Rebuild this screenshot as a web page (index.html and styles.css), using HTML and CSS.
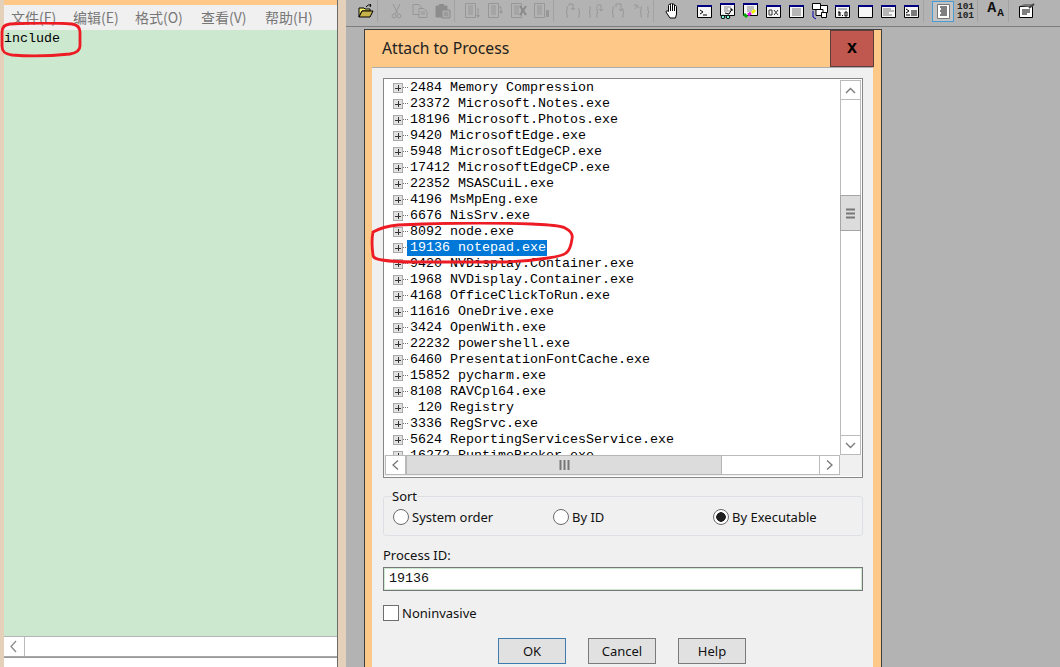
FILE: index.html
```html
<!DOCTYPE html>
<html lang="zh">
<head>
<meta charset="utf-8">
<title>Attach to Process</title>
<link rel="stylesheet" href="styles.css">
</head>
<body>
<div class="notepad">
  <div class="np-window">
    <div class="np-top"></div>
    <nav class="np-menu">
      <span class="m1">文件(F)</span><span class="m2">编辑(E)</span><span class="m3">格式(O)</span><span class="m4">查看(V)</span><span class="m5">帮助(H)</span>
    </nav>
    <div class="np-edit">include</div>
    <div class="np-hscroll">
      <div class="np-left"><svg width="20" height="19" viewBox="0 0 20 19"><path d="M12 4 7 9.500 12 15" fill="none" stroke="#8a8a8a" stroke-width="1.300"/></svg></div>
    </div>
    <div class="np-status"></div>
  </div>
</div>

<main class="debugger">
  <div class="toolbar">
    <div class="tb"><svg width="16" height="14" viewBox="0 0 16 14"><path d="M1 4h5l1 1h5v2H4L1 13Z" fill="#f4ee6a" stroke="#000"/><path d="M1 13h11l3-6H4Z" fill="#c8b24a" stroke="#000"/><path d="M8 3 Q10 0 13 1M13 1l-1.500-1M13 1l-1 2" fill="none" stroke="#000"/></svg></div>
    <i class="sep sep-7"></i>
    <div class="tb"><svg width="11" height="15" viewBox="0 0 11 15"><path d="M2 0l5 10M9 0 4 10" fill="none" stroke="#979797"/><circle cx="3" cy="12" r="2" fill="none" stroke="#979797"/><circle cx="8" cy="12" r="2" fill="none" stroke="#979797"/></svg></div>
    <div class="tb"><svg width="16" height="14" viewBox="0 0 16 14"><path d="M1 .5h6l2 2v8H1Z" fill="none" stroke="#979797"/><path d="M7 4.500h5l3 3v6H7Z" fill="#b3b3b3" stroke="#979797"/><path d="M9 8h4M9 10h4" stroke="#979797"/></svg></div>
    <div class="tb"><svg width="16" height="15" viewBox="0 0 16 15"><path d="M1 2h11v11H1Z" fill="#8d8d8d" stroke="#8d8d8d"/><path d="M4 0h5v3H4Z" fill="#8d8d8d"/><path d="M7 6h8v8H7Z" fill="#aaa" stroke="#8d8d8d"/><path d="M9 9h4M9 11h4" stroke="#8d8d8d"/></svg></div>
    <i class="sep sep-6"></i>
    <div class="tb"><svg width="16" height="16" viewBox="0 0 16 16"><path d="M.5.500h10v14H.5Z" fill="none" stroke="#979797"/><path d="M3 3h5M3 5h5M3 7h5M3 9h5M3 11h5M13 5v9" stroke="#979797"/><path d="M11 12l2 3 2-3Z" fill="#979797"/></svg></div>
    <div class="tb"><svg width="16" height="16" viewBox="0 0 16 16"><path d="M.5.500h10v14H.5Z" fill="none" stroke="#979797"/><path d="M3 3h5M3 5h5M3 7h5M3 9h5M3 11h5M10 4h3v4" fill="none" stroke="#979797"/><path d="M11 8l2 3 2-3Z" fill="#979797"/></svg></div>
    <div class="tb"><svg width="16" height="16" viewBox="0 0 16 16"><path d="M.5.500h10v14H.5Z" fill="none" stroke="#979797"/><path d="M3 3h5M3 5h5M3 7h5M3 9h5M3 11h5" stroke="#979797"/><path d="M9 3l6 9M15 3 9 12" stroke="#8a8a8a" stroke-width="2"/></svg></div>
    <div class="tb"><svg width="16" height="16" viewBox="0 0 16 16"><path d="M.5.500h10v14H.5Z" fill="none" stroke="#979797"/><path d="M3 3h5M3 5h5M3 7h5M3 9h5M3 11h5" stroke="#979797"/><path d="M12 7h3v7h-3Z" fill="#979797"/></svg></div>
    <i class="sep sep-7"></i>
    <div class="tb"><svg width="16" height="16" viewBox="0 0 16 16"><path d="M3 4H2v4L1 9l1 1v4h1M13 6h1v3l1 1-1 1v3h-1M4 3V1h4v5M6 5l2 2 2-2" fill="none" stroke="#979797"/></svg></div>
    <div class="tb"><svg width="16" height="16" viewBox="0 0 16 16"><path d="M3 4H2v4L1 9l1 1v4h1M8 4h1v4l1 1-1 1v4H8M9 2h4v5M11 6l2 2 2-2" fill="none" stroke="#979797"/></svg></div>
    <div class="tb"><svg width="16" height="16" viewBox="0 0 16 16"><path d="M3 4H2v4L1 9l1 1v4h1M11 6h1v3l1 1-1 1v3h-1M5 4V1h5v6M8 6l2 2 2-2" fill="none" stroke="#979797"/></svg></div>
    <div class="tb"><svg width="16" height="16" viewBox="0 0 16 16"><path d="M8 4H7v4L6 9l1 1v4h1M13 4h1v4l1 1-1 1v4h-1M0 2h3l2 3M1 6l2-3" fill="none" stroke="#979797"/></svg></div>
    <i class="sep sep-7"></i>
    <div class="tb tb-hand"><svg width="15" height="17" viewBox="0 0 15 17"><path d="M5 15 1 9c0-1.500 1.500-1.500 2.500-.5V2.500c0-1.500 2-1.500 2 0V1c0-1.300 2-1.300 2 0v1c0-1.300 2-1.300 2 0v1.500c0-1.300 2-1.300 2 0V11l-1 4Z" fill="#fff" stroke="#000"/><path d="M5.500 3v5M7.500 2v6M9.500 3v5" stroke="#000"/></svg></div>
    <div class="tb"><svg class="win" viewBox="0 0 15 13"><use href="#frame"/><path d="M3 5l3 2-3 2M6 10h4" fill="none" stroke="#000"/></svg></div>
    <div class="tb"><svg class="win tall" viewBox="0 0 15 16"><use href="#frame"/><path d="M4 4h7M4 6h4M4 8h6" stroke="#888"/><path d="M5 10l4 1 3-5M10 6h2v2" fill="none" stroke="#000"/><circle cx="3" cy="14" r="1.800" fill="#7fd" stroke="#000"/><circle cx="8" cy="14" r="1.800" fill="#7fd" stroke="#000"/></svg></div>
    <div class="tb"><svg class="win tall" viewBox="0 0 15 16"><use href="#frame"/><path d="M4 4h7M4 6h7M4 8h5" stroke="#888"/><path d="M1 11l3 3" stroke="#0a0" stroke-width="3"/><path d="M5 12l3-2" stroke="#e0e" stroke-width="3"/><path d="M9 10l3-3" stroke="#ee0" stroke-width="3"/></svg></div>
    <div class="tb"><svg class="win" viewBox="0 0 15 13"><use href="#frame"/><path d="M3 5h3v5H3ZM8 5l4 5M12 5l-4 5" fill="none" stroke="#333"/></svg></div>
    <div class="tb"><svg class="win" viewBox="0 0 15 13"><use href="#frame"/><path d="M3 4h9M3 6h9M3 8h9M3 10h9" stroke="#777"/></svg></div>
    <div class="tb"><svg width="16" height="17" viewBox="0 0 16 17"><path d="M.5.500h8v6H.5Z" fill="#fff" stroke="#000"/><path d="M8.500 2.500h7v7h-7Z" fill="#fff" stroke="#000"/><path d="M4 6.500h7v6H4Z" fill="#fff" stroke="#000"/><path d="M9.500 9.500h5v5h-5Z" fill="#fff" stroke="#000"/><path d="M1 8v6l3 2" fill="none" stroke="#00a"/></svg></div>
    <div class="tb"><svg class="win" viewBox="0 0 15 13"><use href="#frame"/><path d="M3 4h9" stroke="#777"/><path d="M3 7h2v4M4 7v4M10 7h2v4h-2ZM7.500 10v1" fill="none" stroke="#000"/></svg></div>
    <div class="tb"><svg class="win" viewBox="0 0 15 13"><use href="#frame"/></svg></div>
    <div class="tb"><svg class="win" viewBox="0 0 15 13"><use href="#frame"/><path d="M2 4h8M2 6h11M2 8h6M2 10h9" stroke="#777"/></svg></div>
    <div class="tb"><svg class="win" viewBox="0 0 15 13"><use href="#frame"/><path d="M2 4l3 2-3 2M2 10h4M7 6h6M7 8h6M7 10h6" fill="none" stroke="#000"/></svg></div>
    <i class="sep sep-view"></i>
    <div class="tb tb-active"><svg width="13" height="15" viewBox="0 0 13 15"><path d="M.5.500h12v14H.5Z" fill="#fff" stroke="#777"/><path d="M3 3h7M4 5h6M3 7h7M4 9h6M3 11h7" stroke="#000"/></svg></div>
    <div class="tb tb-bin"><span>101</span><span>101</span></div>
    <i class="sep"></i>
    <div class="tb tb-font"><b class="big">A</b><b class="small">A</b></div>
    <i class="sep"></i>
    <div class="tb tb-prop"><svg width="16" height="16" viewBox="0 0 16 16"><path d="M.5 3.500h13v11H.5Z" fill="#fff" stroke="#000"/><path d="M1 3 5 1h8l-2 3Z" fill="#777"/><path d="M3 7h8M3 9h8M3 11h5" stroke="#000"/><path d="M10 5l5-4" stroke="#444" stroke-width="2"/></svg></div>
  </div>

  <section class="dialog">
    <header class="titlebar">
      <h1>Attach to Process</h1>
      <button class="close">x</button>
    </header>
    <div class="dialog-body">
      <div class="list">
        <div class="list-main">
          <div class="rows" id="rows">
            <div class="row"><i class="plus"></i><span>2484 Memory Compression</span></div>
            <div class="row"><i class="plus"></i><span>23372 Microsoft.Notes.exe</span></div>
            <div class="row"><i class="plus"></i><span>18196 Microsoft.Photos.exe</span></div>
            <div class="row"><i class="plus"></i><span>9420 MicrosoftEdge.exe</span></div>
            <div class="row"><i class="plus"></i><span>5948 MicrosoftEdgeCP.exe</span></div>
            <div class="row"><i class="plus"></i><span>17412 MicrosoftEdgeCP.exe</span></div>
            <div class="row"><i class="plus"></i><span>22352 MSASCuiL.exe</span></div>
            <div class="row"><i class="plus"></i><span>4196 MsMpEng.exe</span></div>
            <div class="row"><i class="plus"></i><span>6676 NisSrv.exe</span></div>
            <div class="row"><i class="plus"></i><span>8092 node.exe</span></div>
            <div class="row selected"><i class="plus"></i><span>19136 notepad.exe</span></div>
            <div class="row"><i class="plus"></i><span>9420 NVDisplay.Container.exe</span></div>
            <div class="row"><i class="plus"></i><span>1968 NVDisplay.Container.exe</span></div>
            <div class="row"><i class="plus"></i><span>4168 OfficeClickToRun.exe</span></div>
            <div class="row"><i class="plus"></i><span>11616 OneDrive.exe</span></div>
            <div class="row"><i class="plus"></i><span>3424 OpenWith.exe</span></div>
            <div class="row"><i class="plus"></i><span>22232 powershell.exe</span></div>
            <div class="row"><i class="plus"></i><span>6460 PresentationFontCache.exe</span></div>
            <div class="row"><i class="plus"></i><span>15852 pycharm.exe</span></div>
            <div class="row"><i class="plus"></i><span>8108 RAVCpl64.exe</span></div>
            <div class="row"><i class="plus"></i><span> 120 Registry</span></div>
            <div class="row"><i class="plus"></i><span>3336 RegSrvc.exe</span></div>
            <div class="row"><i class="plus"></i><span>5624 ReportingServicesService.exe</span></div>
            <div class="row"><i class="plus"></i><span>16272 RuntimeBroker.exe</span></div>
          </div>
          <div class="vscroll">
            <div class="sbtn"><svg width="19" height="19" viewBox="0 0 19 19"><path d="M5 12l4.500-4.500L14 12" fill="none" stroke="#777" stroke-width="1.300"/></svg></div>
            <div class="vtrack">
              <div class="vthumb"><svg width="12" height="11" viewBox="0 0 12 11"><path d="M1 1.500h9M1 5.500h9M1 9.500h9" stroke="#777" stroke-width="2"/></svg></div>
            </div>
            <div class="sbtn"><svg width="19" height="19" viewBox="0 0 19 19"><path d="M5 7l4.500 4.500L14 7" fill="none" stroke="#777" stroke-width="1.300"/></svg></div>
          </div>
        </div>
        <div class="hscroll">
          <div class="sbtn hbtn"><svg width="19" height="18" viewBox="0 0 19 18"><path d="M12 4.500 7 9l5 4.500" fill="none" stroke="#777" stroke-width="1.300"/></svg></div>
          <div class="hthumb"><svg width="11" height="10" viewBox="0 0 11 10"><path d="M1.500 0v10M5.500 0v10M9.500 0v10" stroke="#777" stroke-width="2"/></svg></div>
          <div class="htrack"></div>
          <div class="sbtn hbtn"><svg width="19" height="18" viewBox="0 0 19 18"><path d="M7 4.500 12 9l-5 4.500" fill="none" stroke="#777" stroke-width="1.300"/></svg></div>
        </div>
      </div>

      <fieldset class="sort">
        <legend>Sort</legend>
        <label class="opt opt-sys"><i class="radio"></i>System order</label>
        <label class="opt opt-id"><i class="radio"></i>By ID</label>
        <label class="opt"><i class="radio on"></i>By Executable</label>
      </fieldset>

      <div class="pid-label">Process ID:</div>
      <div class="pid">19136</div>

      <label class="check"><i class="box"></i>Noninvasive</label>

      <div class="buttons">
        <button class="btn default">OK</button>
        <button class="btn">Cancel</button>
        <button class="btn">Help</button>
      </div>
    </div>
  </section>
</main>

<svg class="mark mark-include" width="84" height="36" viewBox="0 0 84 36"><path d="M10 2C30 1 60 1 72 2 78 3 80 6 80 10L80 24C80 29 76 31 70 32 50 34 25 34 12 33 4 32 2 29 2 24L2 10C2 5 5 2.500 10 2Z" fill="none" stroke="#ed1c24" stroke-width="2.800"/></svg>
<svg class="mark mark-note" width="206" height="44" viewBox="0 0 206 44"><path d="M3 10C10 6 18 4 28 3 70 1 130 1 162 2 178 3 190 3 195 6 201 9 203 13 202 17 201 24 199 29 196 31 192 34 186 35 178 36 160 39 140 40 128 40L45 40C30 40 18 39 12 38 6 37 3 36 3 33 2 26 2 15 3 10Z" fill="none" stroke="#ed1c24" stroke-width="2.800"/></svg>

<svg class="defs" width="0" height="0"><defs><g id="frame"><path d="M.5.500h14v12H.5Z" fill="#f6f6f6" stroke="#000"/><path d="M0 0h15v2H0Z" fill="#000080"/></g></defs></svg>
</body>
</html>
```

FILE: styles.css
```css
* { box-sizing: border-box; }
html, body { margin: 0; padding: 0; }
body {
  width: 1060px;
  height: 667px;
  overflow: hidden;
  display: flex;
  position: relative;
  background: #b3b3b3;
  font-family: "Noto Sans", "Open Sans", sans-serif;
  font-size: 13px;
  color: #111;
}

/* Notepad */
.notepad {
  width: 346px;
  height: 667px;
  flex: none;
  background: #e5d1b9;
  padding-left: 4px;
}
.np-window {
  width: 334px;
  height: 667px;
  display: flex;
  flex-direction: column;
  border-right: 1px solid #6b6b6b;
}
.np-top { height: 5px; background: #fdc888; }
.np-menu {
  height: 25px;
  background: #f0f0f0;
  display: flex;
  color: #777;
  font-family: "Noto Sans CJK SC", "Noto Sans", sans-serif;
  font-size: 14px;
  line-height: 25px;
  white-space: nowrap;
}
.np-menu span { display: block; }
.m1 { margin-left: 7px; width: 62px; }
.m2 { width: 62px; }
.m3 { width: 66px; }
.m4 { width: 64px; }
.np-edit {
  height: 606px;
  background: #cce8cf;
  font: 13.333px/16px "Liberation Mono", monospace;
  color: #000;
  padding-top: 1px;
}
.np-hscroll {
  height: 21px;
  background: #fff;
  border-top: 1px solid #b5b5b5;
  border-bottom: 1px solid #a8a8a8;
  display: flex;
}
.np-left { width: 21px; border-right: 1px solid #bbb; height: 19px; }
.np-left svg { display: block; }
.np-status { flex: 1; background: #fff; border-top: 1px solid #999; }

/* Debugger */
.debugger { flex: 1; min-width: 0; display: flex; flex-direction: column; }
.toolbar {
  height: 27px;
  flex: none;
  display: flex;
  align-items: flex-start;
  padding-left: 8px;
  background: #b3b3b3;
  border-bottom: 1px solid #7d7d7d;
}
.tb {
  width: 23px;
  height: 22px;
  flex: none;
  display: flex;
  align-items: center;
  justify-content: center;
}
.tb svg { display: block; }
.sep { width: 1px; height: 22px; flex: none; background: #a3a3a3; }
.sep-6 { margin-right: 6px; }
.sep-7 { margin-right: 7px; }
.sep-view { margin-right: 8px; }
.tb-hand { margin-right: 9px; }
.win { width: 15px; height: 13px; }
.win.tall { height: 16px; }
.tb-active {
  width: 22px;
  height: 21px;
  margin-top: 1px;
  border: 1px solid #4a9bd1;
  background: #c3c3c3;
}
.tb-bin {
  flex-direction: column;
  font: 700 9.500px/9px "Liberation Mono", monospace;
  color: #222;
}
.tb-font {
  width: 30px;
  padding: 0 0 3px 5px;
  align-items: flex-end;
  gap: 1px;
  color: #111;
  font-family: "Liberation Mono", monospace;
}
.tb-font .big { font-size: 15px; line-height: 15px; margin-bottom: 3px; }
.tb-font .small { font-size: 11px; line-height: 11px; }
.tb-prop { width: 36px; }

.dialog {
  width: 518px;
  margin: 2px 0 0 18px;
  height: 640px;
  background: #fdc888;
  border: 1px solid #3e3e3e;
  border-bottom: 0;
  padding: 0 8px 0 7px;
  display: flex;
  flex-direction: column;
}
.titlebar {
  height: 37px;
  flex: none;
  display: flex;
  align-items: center;
  justify-content: space-between;
  padding-left: 10px;
}
.titlebar h1 {
  margin: 0;
  font-size: 15.700px;
  font-weight: 400;
  color: #222;
  line-height: 37px;
}
.close {
  width: 44px;
  height: 37px;
  background: #c1584f;
  border: 1px solid #5c3f3c;
  font: 700 18px/30px "Liberation Sans", sans-serif;
  color: #000;
  padding: 0 0 4px;
  margin-right: -1px;
}
.dialog-body {
  flex: 1;
  background: #f0f0f0;
  border-top: 1px solid #adadad;
  padding: 10px 10px 0 11px;
}

.list {
  width: 480px;
  height: 400px;
  background: #fff;
  border: 1px solid #878787;
  display: flex;
  flex-direction: column;
  background-clip: padding-box;
}
.list-main { height: 376px; display: flex; overflow: hidden; flex: none; }
.rows {
  flex: 1;
  min-width: 0;
  overflow: hidden;
  padding-top: 1px;
  font: 13.333px/16px "Liberation Mono", monospace;
  color: #000;
}
.row {
  height: 16px;
  padding-left: 9px;
  display: flex;
  align-items: center;
  white-space: pre;
}
.row span { display: block; margin-left: 4px; padding: 0 1px 0 3px; height: 16px; line-height: 16px; }
.selected span { background: #0078d7; color: #fff; }
.plus {
  position: relative;
  width: 10px;
  height: 10px;
  flex: none;
  background:
    linear-gradient(#333, #333) center / 6px 1px no-repeat,
    linear-gradient(#333, #333) center / 1px 6px no-repeat,
    #e2e2e2;
  border: 1px solid #aaa;
}
.plus::after {
  content: "";
  position: absolute;
  left: 9px;
  top: 3px;
  width: 5px;
  border-top: 1px dotted #777;
}
.vscroll {
  width: 21px;
  flex: none;
  margin-right: 1px;
  margin-top: 1px;
  display: flex;
  flex-direction: column;
  background: #fff;
  border-left: 1px solid #bbb;
  border-right: 1px solid #bbb;
}
.sbtn {
  width: 19px;
  height: 20px;
  flex: none;
  background: #fff;
  border-top: 1px solid #bbb;
  border-bottom: 1px solid #bbb;
}
.sbtn svg { display: block; }
.vtrack { flex: 1; padding-top: 95px; }
.vthumb {
  height: 36px;
  margin: 0 -1px;
  background: #dcdcdc;
  border: 1px solid #a5a5a5;
  display: flex;
  align-items: center;
  justify-content: center;
}
.hscroll {
  height: 21px;
  flex: none;
  display: flex;
  padding: 0 22px 1px 1px;
  background: #f0f0f0;
}
.hbtn {
  width: 21px;
  height: 20px;
  background: #fff;
  border: 1px solid #bbb;
}
.hthumb {
  width: 316px;
  height: 20px;
  background: #dcdcdc;
  border: 1px solid #b5b5b5;
  display: flex;
  align-items: center;
  justify-content: center;
}
.htrack { flex: 1; background: #fff; border-top: 1px solid #bbb; border-bottom: 1px solid #bbb; }

.sort {
  width: 480px;
  height: 48px;
  margin: 10px 0 0;
  padding: 0 0 0 9px;
  border: 1px solid #dcdfe3;
  border-radius: 3px;
  display: flex;
  align-items: flex-start;
}
.sort legend { padding: 0; margin-left: -1px; line-height: 16px; }
.opt { display: flex; align-items: center; height: 18px; margin-top: 4px; white-space: nowrap; }
.opt-sys { width: 160px; }
.opt-id { width: 160px; }
.radio {
  width: 16px;
  height: 16px;
  flex: none;
  margin-right: 3px;
  border: 1px solid #6a6a6a;
  border-radius: 50%;
  background: #fff;
}
.radio.on { background: radial-gradient(circle, #1f1f1f 0 4.500px, #fff 5px); }

.pid-label { margin-top: 11px; line-height: 17px; }
.pid {
  width: 480px;
  height: 24px;
  margin-top: 3px;
  padding-left: 5px;
  background: #fff;
  border: 1px solid #777;
  box-shadow: inset 0 0 0 1px #cce8cf;
  font: 13.333px/21px "Liberation Mono", monospace;
}
.check { display: flex; align-items: center; height: 16px; margin-top: 14px; }
.box {
  width: 16px;
  height: 16px;
  margin-right: 3px;
  background: #fff;
  border: 1px solid #6f6f6f;
}
.buttons { display: flex; gap: 22px; margin-top: 17px; padding-left: 115px; }
.btn {
  width: 68px;
  height: 26px;
  padding: 0;
  background: #e1e1e1;
  border: 1px solid #7a7a7a;
  font: inherit;
  color: #111;
}
.btn.default { border-color: #3f7cad; }

/* Red freehand annotations on top of the screenshot */
.mark { position: absolute; pointer-events: none; }
.mark-include { left: 0; top: 22px; }
.mark-note { left: 370px; top: 222px; }
.defs { position: absolute; }
```
